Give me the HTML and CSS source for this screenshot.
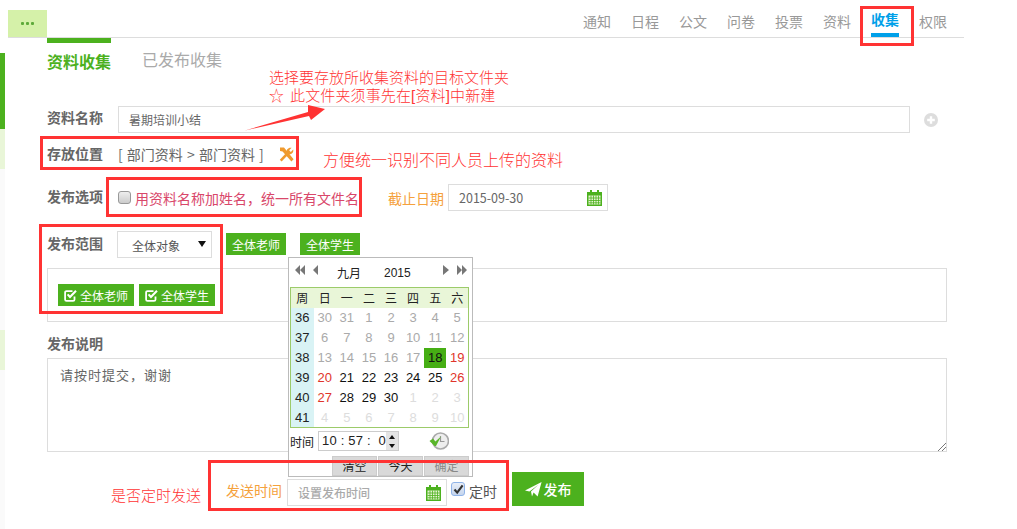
FILE: index.html
```html
<!DOCTYPE html>
<html lang="zh-CN">
<head>
<meta charset="utf-8">
<title>资料收集</title>
<link rel="stylesheet" href="styles.css">
</head>
<body>
<div class="page">
  <aside class="rail">
    <div class="rail-item rail-on"></div>
    <div class="rail-item rail-soft"></div>
    <div class="rail-item rail-soft rail-low"></div>
  </aside>
  <main class="main">
    <header class="topbar">
      <div class="more"><i></i><i></i><i></i></div>
      <nav class="nav">
        <a class="nav-item">通知</a><a class="nav-item">日程</a><a class="nav-item">公文</a><a class="nav-item">问卷</a><a class="nav-item">投票</a><a class="nav-item">资料</a><a class="nav-item nav-active">收集</a><a class="nav-item">权限</a>
      </nav>
    </header>
    <div class="tabs">
      <a class="tab tab-active">资料收集</a>
      <a class="tab">已发布收集</a>
    </div>
    <form class="form">
      <div class="row row-name">
        <span class="label label-name">资料名称</span>
        <div class="field field-name">暑期培训小结</div>
        <svg class="plus" width="14" height="14" viewBox="0 0 14 14"><circle cx="7" cy="7" r="7" fill="#ddd"/><path d="M7 3.2v7.6M3.2 7h7.6" stroke="#fff" stroke-width="2.4"/></svg>
      </div>
      <div class="row row-place">
        <span class="label label-place">存放位置</span>
        <span class="place-text">[ 部门资料 &gt; 部门资料 ]</span>
        <svg class="tools" width="15" height="15" viewBox="0 0 15 15"><path d="M1 .6 L5 .6 L14.6 12.2 L12.4 14.4 L3.6 4.4 L1 4 Z" fill="#ef9a2e"/><path d="M.8 12.8 L7.6 5.6 C7 2.8 9.4 0 12.6 .8 L10.2 3.2 L11.8 5 L14.2 2.6 C15 5.8 12 8.2 9.4 7.4 L2.6 14.6 Z" fill="#ef9a2e"/></svg>
      </div>
      <div class="row row-option">
        <span class="label label-up">发布选项</span>
        <span class="check"></span>
        <span class="option-text">用资料名称加姓名，统一所有文件名</span>
        <span class="due-label">截止日期</span>
        <div class="field field-date">2015-09-30
          <svg class="cal" width="15" height="16" viewBox="0 0 15 16"><path d="M3 0h2v2h5V0h2v2h3v14H0V2h3z" fill="#4cb11e"/><path d="M1.5 5.5h12v9h-12z" fill="#e6f3d2"/><path d="M1.5 8h12M1.5 10.5h12M1.5 12.8h12M4 5.5v9M6.5 5.5v9M9 5.5v9M11.5 5.5v9" stroke="#4cb11e" stroke-width=".8"/></svg>
        </div>
      </div>
      <div class="row row-scope">
        <span class="label label-up">发布范围</span>
        <div class="select">全体对象<i class="select-arrow"></i></div>
        <a class="btn-green btn-scope">全体老师</a>
        <a class="btn-green btn-scope">全体学生</a>
      </div>
      <div class="picked">
        <span class="btn-green chip"><svg width="13" height="13" viewBox="0 0 13 13"><path d="M10.5 7.5v3a1.4 1.4 0 0 1-1.4 1.4H2.5a1.4 1.4 0 0 1-1.4-1.4V3.5a1.4 1.4 0 0 1 1.4-1.4H8.5" fill="none" stroke="#fff" stroke-width="1.8"/><path d="M3.6 5.4 L6 8 L12 1.8" fill="none" stroke="#fff" stroke-width="2.1"/></svg>全体老师</span>
        <span class="btn-green chip"><svg width="13" height="13" viewBox="0 0 13 13"><path d="M10.5 7.5v3a1.4 1.4 0 0 1-1.4 1.4H2.5a1.4 1.4 0 0 1-1.4-1.4V3.5a1.4 1.4 0 0 1 1.4-1.4H8.5" fill="none" stroke="#fff" stroke-width="1.8"/><path d="M3.6 5.4 L6 8 L12 1.8" fill="none" stroke="#fff" stroke-width="2.1"/></svg>全体学生</span>
      </div>
      <div class="label notes-label">发布说明</div>
      <div class="notes">请按时提交，谢谢
        <svg class="grip" width="8" height="8" viewBox="0 0 8 8"><path d="M0 8L8 0M4 8L8 4" stroke="#777" stroke-width="1"/></svg>
      </div>
      <div class="row row-send">
        <span class="send-label">发送时间</span>
        <div class="field field-send">设置发布时间
          <svg class="cal" width="15" height="16" viewBox="0 0 15 16"><path d="M3 0h2v2h5V0h2v2h3v14H0V2h3z" fill="#4cb11e"/><path d="M1.5 5.5h12v9h-12z" fill="#e6f3d2"/><path d="M1.5 8h12M1.5 10.5h12M1.5 12.8h12M4 5.5v9M6.5 5.5v9M9 5.5v9M11.5 5.5v9" stroke="#4cb11e" stroke-width=".8"/></svg>
        </div>
        <span class="check check-on"><svg width="11" height="11" viewBox="0 0 11 11"><path d="M1.5 5.5 L4.2 8.6 L9.6 1.4" fill="none" stroke="#333" stroke-width="2.2"/></svg></span>
        <span class="timed">定时</span>
        <a class="btn-green submit"><svg width="17" height="15" viewBox="0 0 17 15"><path d="M0 8.4 L16.6 0 L12.6 14.4 L8.6 10.6 L7 14.6 L6 9.6 L13.4 2.8 L4.4 9.4 Z" fill="#fff"/></svg>发布</a>
      </div>
    </form>
  </main>

  <div class="calendar">
    <div class="cal-head">
      <svg class="cal-arrows" width="24" height="10" viewBox="0 0 24 10"><path d="M5 0v10L0 5zM10 0v10L5 5zM23 0v10L18 5z" fill="#777"/></svg>
      <span class="cal-month">九月</span>
      <span class="cal-year">2015</span>
      <svg class="cal-arrows cal-arrows-next" width="24" height="10" viewBox="0 0 24 10"><path d="M0 0v10L6 5zM14 0v10L19 5zM19 0v10L24 5z" fill="#777"/></svg>
    </div>
    <table class="cal-table">
      <thead><tr><th>周</th><th>日</th><th>一</th><th>二</th><th>三</th><th>四</th><th>五</th><th>六</th></tr></thead>
      <tbody>
        <tr><th>36</th><td>30</td><td>31</td><td>1</td><td>2</td><td>3</td><td>4</td><td>5</td></tr>
        <tr><th>37</th><td>6</td><td>7</td><td>8</td><td>9</td><td>10</td><td>11</td><td>12</td></tr>
        <tr><th>38</th><td>13</td><td>14</td><td>15</td><td>16</td><td>17</td><td class="today">18</td><td class="red">19</td></tr>
        <tr><th>39</th><td class="red">20</td><td class="now">21</td><td class="now">22</td><td class="now">23</td><td class="now">24</td><td class="now">25</td><td class="red">26</td></tr>
        <tr><th>40</th><td class="red">27</td><td class="now">28</td><td class="now">29</td><td class="now">30</td><td class="off">1</td><td class="off">2</td><td class="off">3</td></tr>
        <tr><th>41</th><td class="off">4</td><td class="off">5</td><td class="off">6</td><td class="off">7</td><td class="off">8</td><td class="off">9</td><td class="off">10</td></tr>
      </tbody>
    </table>
    <div class="cal-time">
      <span class="time-label">时间</span>
      <div class="time-box"><span class="time-text">10 : 57 :&nbsp; 0</span>
        <div class="spin"><i class="spin-up"></i><i class="spin-down"></i></div>
      </div>
      <svg class="clock" width="20" height="20" viewBox="0 0 20 20"><circle cx="11.5" cy="10" r="8" fill="#eee" stroke="#aaa" stroke-width="1.6"/><path d="M11.5 5v5.5h4" fill="none" stroke="#999" stroke-width="1.2"/><path d="M0.5 10 L4 7.6 L6.4 10.4 L12 5.6 L7 15 L5.6 15 Z" fill="#59b52a"/></svg>
    </div>
    <div class="cal-actions">
      <a class="cal-btn">清空</a><a class="cal-btn">今天</a><a class="cal-btn cal-btn-dim">确定</a>
    </div>
  </div>

  <div class="mark mark-nav"></div>
  <div class="mark mark-place"></div>
  <div class="mark mark-option"></div>
  <div class="mark mark-scope"></div>
  <div class="mark mark-send"></div>

  <div class="note note-target">
    <div class="note-line">选择要存放所收集资料的目标文件夹</div>
    <div class="note-line note-line-star"><span class="star">☆</span>此文件夹须事先在[资料]中新建</div>
  </div>
  <p class="note note-name">方便统一识别不同人员上传的资料</p>
  <p class="note note-timer">是否定时发送</p>
  <svg class="arrow" width="84" height="30" viewBox="0 0 84 30"><path d="M0 26.5 L63 8 L63 1 L80 5 L66 16 L64 12 Z" fill="#f33"/></svg>
</div>
</body>
</html>
```

FILE: styles.css
```css
* { box-sizing: border-box; }
html, body { margin: 0; padding: 0; background: #fff; }
body { font-family: "Noto Sans CJK SC", "Open Sans", sans-serif; font-size: 14px; color: #666; }
.page { position: relative; width: 1017px; height: 529px; overflow: hidden; display: flex; }

.rail { width: 5px; margin-top: 53px; margin-right: 3px; background: #fafafa; flex: none; }
.rail-item { height: 40px; }
.rail-on { height: 76px; background: #4cb11e; }
.rail-soft { background: #e9f6d8; }
.rail-low { margin-top: 161px; }

.main { width: 956px; flex: none; }
.topbar { height: 38px; border-bottom: 1px solid #ddd; display: flex; justify-content: space-between; padding-right: 17px; }
.more { width: 39px; height: 27px; margin-top: 10px; background: #d5f1a9; display: flex; align-items: center; justify-content: center; gap: 2px; }
.more i { width: 3px; height: 3px; background: #5eaa3a; border-radius: 1px; }
.nav { display: flex; gap: 20px; }
.nav-item { width: 28px; height: 37px; line-height: 20px; padding-top: 11px; color: #999; font-size: 14px; white-space: nowrap; }
.nav-active { color: #00a0e9; font-weight: 700; padding-top: 9px; border-bottom: 4px solid #00a0e9; }

.tabs { display: flex; gap: 31px; padding-left: 39px; height: 68px; }
.tab { font-size: 16px; line-height: 24px; color: #aaa; padding-top: 9px; }
.tab-active { border-top: 5px solid #4cb11e; color: #4cb11e; font-weight: 700; padding-top: 6px; height: 36px; }

.form { padding-left: 39px; width: 939px; }
.row { display: flex; align-items: center; }
.label { font-weight: 700; color: #666; font-size: 14px; width: 71px; flex: none; line-height: 20px; }
.label-name { padding-bottom: 6px; height: 26px; }
.label-place { padding-bottom: 2px; height: 22px; }
.label-up { padding-bottom: 4px; height: 24px; }
.field { height: 27px; border: 1px solid #ddd; background: #fff; font-size: 12px; line-height: 25px; color: #666; padding-left: 10px; position: relative; flex: none; }
.cal { position: absolute; right: 5px; top: 5px; }

.row-name { height: 27px; }
.field-name { width: 792px; font-size: 12px; }
.plus { margin-left: 14px; }

.row-place { height: 24px; margin-top: 9px; }
.place-text { font-size: 14px; color: #666; width: 161px; word-spacing: 1px; white-space: nowrap; }
.tools { flex: none; }

.row-option { height: 27px; margin-top: 18px; }
.check { width: 13px; height: 13px; flex: none; border: 1px solid #999; border-radius: 3px; background: linear-gradient(#eee, #ccc); }
.option-text { margin-left: 4px; width: 224px; color: #d9476a; font-size: 14px; white-space: nowrap; }
.due-label { margin-left: 29px; width: 60px; color: #f5a13c; font-size: 14px; white-space: nowrap; }
.field-date { width: 160px; font-size: 12.5px; }

.row-scope { height: 27px; margin-top: 20px; }
.select { width: 95px; height: 27px; border: 1px solid #ddd; margin-left: -1px; font-size: 12px; line-height: 27px; padding-left: 14px; position: relative; flex: none; color: #555; }
.select-arrow { position: absolute; right: 5px; top: 9px; border: 4px solid transparent; border-top: 6px solid #111; border-bottom: 0; }
.btn-green { background: #4cb11e; color: #fff; display: flex; align-items: center; justify-content: center; flex: none; }
.btn-scope { width: 60px; height: 22px; font-size: 12px; align-self: flex-start; margin-top: 2px; }
.select + .btn-scope { margin-left: 14px; }
.btn-scope + .btn-scope { margin-left: 14px; }

.picked { width: 900px; height: 54px; margin-top: 10px; border: 1px solid #ddd; padding: 15px 0 0 10px; display: flex; gap: 5px; }
.chip { width: 76px; height: 22px; font-size: 12px; gap: 3px; }

.notes-label { margin-top: 11px; height: 22px; }
.notes { width: 900px; height: 94px; margin-top: 3px; border: 1px solid #ddd; padding: 6px 0 0 12px; font-size: 13px; line-height: 20px; letter-spacing: 1px; color: #666; position: relative; }
.grip { position: absolute; right: 0; bottom: 0; }

.row-send { height: 34px; margin-top: 20px; padding-left: 179px; align-items: flex-start; }
.send-label { width: 61px; color: #f5a13c; font-size: 14px; line-height: 20px; padding-top: 8px; height: 29px; white-space: nowrap; }
.field-send { width: 160px; height: 27px; margin-top: 7px; padding-left: 10px; color: #aaa; font-weight: 500; }
.check-on { width: 14px; height: 14px; margin: 10px 0 0 4px; border: 1px solid #8fb3e8; background: linear-gradient(#e8eef8, #c5d5ee); display: flex; align-items: center; justify-content: center; }
.timed { margin: 9px 0 0 4px; width: 43px; line-height: 20px; font-size: 14px; color: #555; }
.submit { width: 72px; height: 34px; font-size: 14px; font-weight: 500; gap: 2px; }

.calendar { position: absolute; left: 288px; top: 257px; width: 185px; height: 220px; border: 1px solid #bbb; background: #fff; padding: 0 1px; font-family: "Liberation Sans", "Noto Sans CJK SC", sans-serif; }
.cal-head { height: 29px; position: relative; font-size: 13px; color: #222; }
.cal-arrows { position: absolute; left: 5px; top: 7px; }
.cal-arrows-next { left: auto; right: 4px; }
.cal-month { position: absolute; left: 47px; top: 6px; font-family: "Noto Sans CJK SC", sans-serif; font-size: 12px; line-height: 18px; }
.cal-year { position: absolute; left: 94px; top: 7px; font-size: 12px; line-height: 16px; }
.cal-table { border-collapse: collapse; table-layout: fixed; width: 179px; border: 1px solid #9ccb6a; font-size: 13px; color: #111; }
.cal-table th, .cal-table td { width: 22px; height: 20px; padding: 0; text-align: center; font-weight: 400; color: #aaa; }
.cal-table th:first-child { width: 23px; }
.cal-table thead th { background: #e9f6d8; color: #222; font-family: "Noto Sans CJK SC", sans-serif; font-size: 12px; }
.cal-table tbody th { background: #d9f3f5; color: #222; }
.cal-table .now { color: #111; }
.cal-table .red { color: #e0352b; }
.cal-table .off { color: #ddd; }
.cal-table .today { background: #46ae14; color: #111; }
.cal-time { display: flex; align-items: center; height: 24px; margin-top: 1px; }
.time-label { width: 28px; font-family: "Noto Sans CJK SC", sans-serif; font-size: 12px; color: #222; }
.time-box { width: 81px; height: 20px; border: 1px solid #ccc; display: flex; justify-content: space-between; font-size: 13px; line-height: 18px; padding-left: 3px; color: #222; }
.time-text { letter-spacing: .2px; white-space: nowrap; }
.spin { width: 13px; background: #e4e4e4; display: flex; flex-direction: column; align-items: center; justify-content: space-around; }
.spin i { border: 3px solid transparent; }
.spin-up { border-bottom: 4px solid #111 !important; border-top: 0 !important; }
.spin-down { border-top: 4px solid #111 !important; border-bottom: 0 !important; }
.clock { margin-left: 30px; }
.cal-actions { display: flex; gap: 1px; padding-left: 42px; margin-top: 3px; }
.cal-btn { width: 45px; height: 20px; background: #d9d9d9; border: 1px solid #ccc; font-family: "Noto Sans CJK SC", sans-serif; font-size: 12px; line-height: 18px; text-align: center; color: #222; }
.cal-btn-dim { color: #888; }

.mark { position: absolute; border: 3px solid #f33; pointer-events: none; }
.mark-nav { left: 860px; top: 6px; width: 54px; height: 40px; }
.mark-place { left: 40px; top: 136px; width: 259px; height: 34px; }
.mark-option { left: 106px; top: 177px; width: 256px; height: 40px; }
.mark-scope { left: 39px; top: 224px; width: 184px; height: 90px; }
.mark-send { left: 208px; top: 460px; width: 301px; height: 51px; }

.note { position: absolute; margin: 0; color: #f33; font-size: 15px; line-height: 18px; white-space: nowrap; font-weight: 300; font-family: "Liberation Sans", "Noto Sans CJK SC", sans-serif; }
.note-target { left: 269px; top: 69px; }
.note-line { height: 18px; }
.note-line-star { letter-spacing: .14px; }
.star { display: inline-block; width: 21px; font-size: 15px; }
.note-name { left: 323px; top: 152px; font-size: 16px; }
.note-timer { left: 111px; top: 487px; }
.arrow { position: absolute; left: 245px; top: 104px; }
```
